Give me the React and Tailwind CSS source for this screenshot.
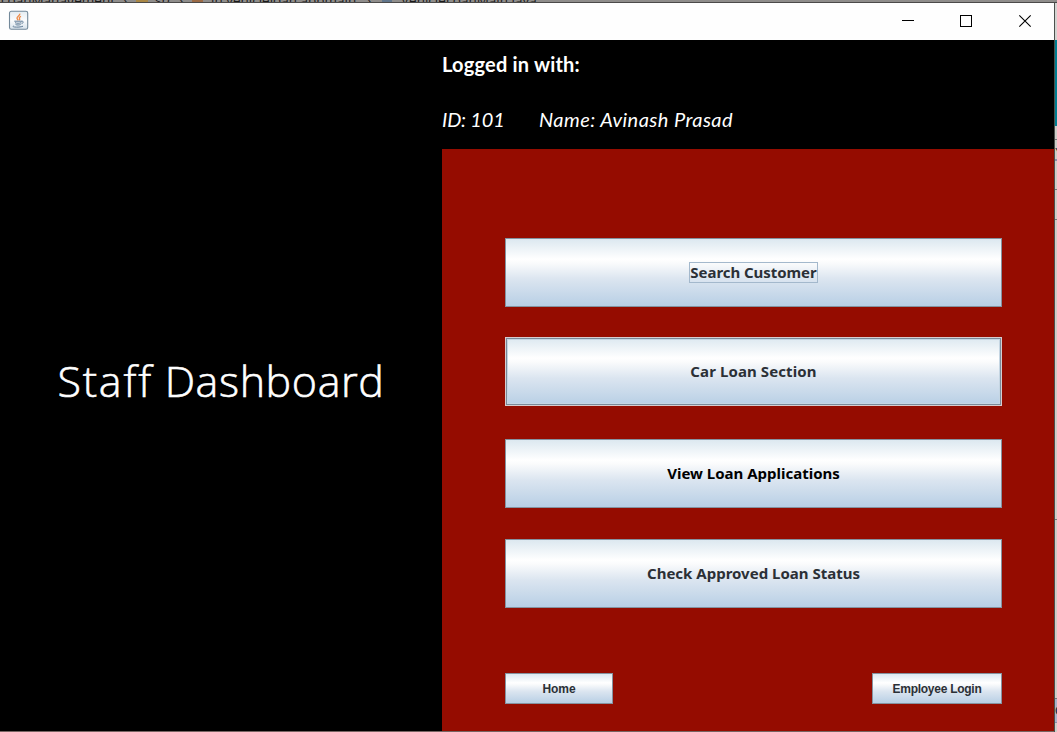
import React from "react";

const gradient =
  "bg-[linear-gradient(to_bottom,#dce8f0_0%,#ffffff_30%,#fafbfc_36%,#dbe5f0_60%,#b8cfe5_100%)]";

function MenuButton({ children, className = "" }) {
  return (
    <button
      className={`flex h-[69px] w-full items-center justify-center border border-[#8593a0] pb-px text-[#2b3036] ${gradient} ${className}`}
    >
      {children}
    </button>
  );
}

function Label({ children, className = "" }) {
  return (
    <span
      className={`whitespace-pre font-['Noto_Sans',sans-serif] text-[15px] leading-[19px] font-bold ${className}`}
    >
      {children}
    </span>
  );
}

function SmallButton({ children, className = "" }) {
  return (
    <button
      className={`flex h-[31px] items-center justify-center border border-[#8593a0] font-['Liberation_Sans',sans-serif] text-[12px] leading-[14px] font-bold text-[#2b3036] ${gradient} ${className}`}
    >
      {children}
    </button>
  );
}

function JavaIcon() {
  return (
    <svg width="20" height="20" viewBox="0 0 20 20" fill="none">
      <defs>
        <linearGradient id="tile" x1="0" y1="0" x2="0" y2="1">
          <stop offset="0" stopColor="#e4ecf1" />
          <stop offset=".5" stopColor="#fbfcfd" />
          <stop offset="1" stopColor="#d7e2eb" />
        </linearGradient>
      </defs>
      <rect x=".5" y="3.6" width="18.2" height="18" rx="1.8" transform="translate(0 -0.300)" fill="url(#tile)" stroke="#73899a" strokeWidth="1.1" />
      <g transform="translate(0 2.500)">
        <path d="M10.800 3.200c.5 1.800-3 2.600-2.800 4.400.1.8.8 1.500 1.300 2.200M12 5.800c-1.600.7-2.200 1.300-1.400 2.300.4.6.1 1.100-.4 1.600" stroke="#ee8b48" strokeWidth="1.300" />
        <path d="M5.300 10.700h7.700M6 12.200c1.500.7 4.500.7 6.300 0M6.600 14c1.400.7 3.600.6 5 0M12.800 10.800c2-.4 1.900 1.700-.2 2.300M4.500 15.300c-1 .3-.5 1 1 1.200 2.600.3 6.500.1 8.500-.8" stroke="#607c97" strokeWidth="1" />
      </g>
    </svg>
  );
}

function TitleBar() {
  return (
    <header className="flex h-[37px] shrink-0 items-start justify-between bg-[#fefefe]">
      <div className="pt-[5px] pl-[9px] [&>svg]:overflow-visible">
        <JavaIcon />
      </div>
      <svg width="174" height="37" fill="none" stroke="#000" className="shrink-0">
        <path d="M22 17.500h12" shapeRendering="crispEdges" />
        <rect x="80.500" y="12.500" width="11" height="11" shapeRendering="crispEdges" />
        <path d="M139.300 12.300l11.400 11.400M150.700 12.300l-11.400 11.400" strokeWidth="1.100" />
      </svg>
    </header>
  );
}

function BackgroundEdge() {
  return (
    <aside className="flex w-[2px] shrink-0 flex-col bg-[#cfcdc9]">
      <div className="h-[37px] bg-[#d5d4d2]" />
      <div className="h-[86px] bg-[#007f92]" />
      <div className="h-[13px]" />
      <div className="h-px bg-[#77777b]" />
      <div className="h-[7px]" />
      <div className="h-[12px] overflow-hidden font-['Liberation_Sans',sans-serif] text-[12px] leading-[12px] text-[#26323e]">Y</div>
      <div className="h-[2px] bg-[#8c8dab]" />
      <div className="h-[29px] border-b border-[#77777b]" />
      <div className="h-[30px] border-b border-[#77777b]" />
      <div className="h-[300px] border-b border-[#77777b]" />
      <div className="h-[179px] border-b border-[#77777b]" />
      <div className="h-[24px] overflow-hidden border-b border-[#8c8dab] bg-[#aab2ca] font-['Liberation_Sans',sans-serif] text-[13px] leading-[24px] text-[#102c3c]">C</div>
    </aside>
  );
}

export default function App() {
  return (
    <div className="flex h-[732px] w-[1057px] flex-col overflow-hidden bg-black">
      <div className="flex h-[2px] shrink-0 items-end overflow-hidden bg-[#8f8d8b] font-['Open_Sans',sans-serif] text-[13.5px] leading-[4px] whitespace-pre text-[#1a1a1a]">
        <span className="flex w-[123px] shrink-0 justify-end pr-[8px]">LoanManagement</span>
        <span className="w-[13px] shrink-0">›</span>
        <span className="mr-[7px] h-[2px] w-[12px] shrink-0 bg-[#a98745]" />
        <span className="w-[24px] shrink-0">src</span>
        <span className="w-[13px] shrink-0">›</span>
        <span className="mr-[8px] h-[2px] w-[11px] shrink-0 bg-[#9b6a45]" />
        <span className="w-[156px] shrink-0">in.vehicleloan.appmain</span>
        <span className="w-[15px] shrink-0">›</span>
        <span className="mr-[9px] h-[2px] w-[10px] shrink-0 bg-[#60758b]" />
        <span>VehicleLoanMain.java</span>
      </div>
      <div className="h-px shrink-0 bg-[#4b4a49]" />
      <div className="flex min-h-0 flex-1">
        <div className="flex w-[1054px] shrink-0 flex-col">
          <TitleBar />
          <main className="flex h-[691px] shrink-0 bg-black">
            <section className="flex w-[442px] shrink-0 justify-center pt-[311px]">
              <h1 className="font-['Open_Sans',sans-serif] text-[43px] leading-[60px] font-light whitespace-pre text-white [-webkit-text-stroke:0.6px_white]">
                <span className="tracking-[1.8px]">Staff</span>
                <span className="tracking-[0.6px]"> Dashboard</span>
              </h1>
            </section>
            <section className="flex flex-1 flex-col">
              <div className="flex h-[109px] shrink-0 flex-col pt-[12px] font-['Lato',sans-serif] text-[20px] leading-6 text-white">
                <h2 className="font-bold tracking-[0.2px] whitespace-pre">Logged in with:</h2>
                <div className="flex pt-[31px] italic">
                  <span className="w-[97px] tracking-[-0.2px] whitespace-pre">ID: 101</span>
                  <span className="tracking-[0.45px] whitespace-pre">Name: Avinash Prasad</span>
                </div>
              </div>
              <div className="flex flex-1 flex-col bg-[#950c00] pt-[89px] pr-[52px] pl-[63px]">
                <MenuButton>
                  <Label className="border border-[#a3b8cc] tracking-[-0.05px]">Search Customer</Label>
                </MenuButton>
                <div className="pt-[30px]">
                  <MenuButton className="border-[#d6cdd0] shadow-[inset_0_0_0_1px_#7a8a99,inset_0_0_0_2px_#c5d6e3]">
                    <Label className="tracking-[0.1px]">Car Loan Section</Label>
                  </MenuButton>
                </div>
                <div className="pt-[33px]">
                  <MenuButton>
                    <Label className="text-black">View Loan Applications</Label>
                  </MenuButton>
                </div>
                <div className="pt-[31px]">
                  <MenuButton>
                    <Label>Check Approved Loan Status</Label>
                  </MenuButton>
                </div>
                <div className="flex justify-between pt-[65px]">
                  <SmallButton className="w-[108px] tracking-[-0.1px]">Home</SmallButton>
                  <SmallButton className="w-[130px] tracking-[-0.27px]">Employee Login</SmallButton>
                </div>
              </div>
            </section>
          </main>
          <div className="h-px shrink-0 bg-[#776563]" />
        </div>
        <div className="w-px shrink-0 bg-[#4c514d]" />
        <BackgroundEdge />
      </div>
    </div>
  );
}
